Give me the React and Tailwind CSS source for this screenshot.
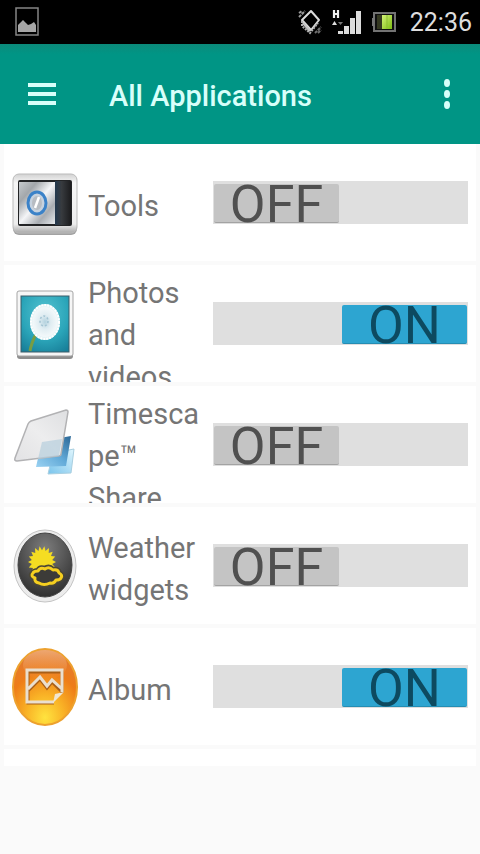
import { useState } from 'react'

function PictureIcon() {
  return (
    <svg width="24" height="30" viewBox="0 0 24 30" aria-hidden="true">
      <rect x="1" y="1" width="22" height="27" fill="none" stroke="#858585" strokeWidth="1.5" />
      <path d="M3 25V18l2-2 3-3 3 3 2 2 3-1 3-2 2 3v7z" fill="#a6a6a6" />
    </svg>
  )
}

function VibrateIcon() {
  return (
    <svg width="24" height="26" viewBox="0 0 24 26" fill="none" aria-hidden="true">
      <path d="M13 2l8 9-8 10-9-10z" stroke="#dcdcdc" strokeWidth="2" strokeLinejoin="round" />
      <path d="M4 12v5l8 7 8-10" stroke="#b0b0b0" strokeWidth="2" strokeDasharray="2 1" />
      <path d="M5 14l7 8" stroke="#c4c4c4" strokeWidth="2.5" />
      <path d="M1 8l6-6M1 4l3-2" stroke="#9a9a9a" strokeWidth="2" strokeDasharray="3 1" />
      <path d="M17 24l6-6M20 24l3-3" stroke="#707070" strokeWidth="2" strokeDasharray="3 1" />
    </svg>
  )
}

function SignalIcon() {
  return (
    <svg width="30" height="26" viewBox="0 0 30 26" fill="#dcdcdc" aria-hidden="true">
      <path d="M2 1v8M6 1v8M2 5h4" stroke="#f0f0f0" strokeWidth="2.200" />
      <path d="M0 16l2.500-4 2.500 4z" />
      <path d="M6 13h5l-2.500 3z" fill="#777777" />
      <rect x="6" y="22" width="5" height="3" />
      <rect x="12" y="17" width="5" height="8" />
      <rect x="18" y="9" width="5" height="16" />
      <rect x="24" y="2" width="5" height="23" />
    </svg>
  )
}

function BatteryIcon() {
  return (
    <svg width="24" height="22" viewBox="0 0 24 22" aria-hidden="true">
      <defs>
        <linearGradient id="charge" x1="0" y1="0" x2="1" y2="1">
          <stop offset="0" stopColor="#d3f277" />
          <stop offset="1" stopColor="#7dbd13" />
        </linearGradient>
      </defs>
      <rect x="2" y="2" width="21" height="18" fill="#101010" stroke="#737373" strokeWidth="2" />
      <rect x="0" y="7" width="2" height="8" fill="#777777" />
      <rect x="5" y="4" width="5" height="14" fill="#343821" />
      <rect x="10" y="4" width="10" height="14" fill="url(#charge)" />
      <path d="M15 4v14" stroke="#8dbd33" strokeWidth="1" />
    </svg>
  )
}

function ToolsIcon() {
  return (
    <svg width="66" height="80" viewBox="0 0 66 80" aria-hidden="true">
      <defs>
        <linearGradient id="toolsFrame" x1="0" y1="0" x2="0" y2="1">
          <stop offset="0" stopColor="#d2d2d2" />
          <stop offset=".15" stopColor="#f6f6f6" />
          <stop offset=".85" stopColor="#ededed" />
          <stop offset="1" stopColor="#a8a8a8" />
        </linearGradient>
        <linearGradient id="toolsSteel" x1="0" y1="0" x2="1" y2="1">
          <stop offset="0" stopColor="#c6cacd" />
          <stop offset=".25" stopColor="#a3a7ab" />
          <stop offset=".5" stopColor="#f4f5f7" />
          <stop offset=".75" stopColor="#a9adb2" />
          <stop offset="1" stopColor="#e6e9ec" />
        </linearGradient>
        <linearGradient id="toolsDark" x1="0" y1="0" x2="1" y2="0">
          <stop offset="0" stopColor="#22384e" />
          <stop offset=".4" stopColor="#383b3f" />
          <stop offset="1" stopColor="#1c1c1e" />
        </linearGradient>
      </defs>
      <rect x="1" y="12" width="64" height="60" rx="6" fill="#a2a2a2" />
      <rect x="1" y="11" width="64" height="59" rx="6" fill="url(#toolsFrame)" stroke="#bbbbbb" />
      <rect x="6" y="17" width="54" height="46" rx="2" fill="#232426" />
      <rect x="7" y="19" width="36" height="42" fill="url(#toolsSteel)" />
      <rect x="43" y="18" width="16" height="44" fill="url(#toolsDark)" />
      <ellipse cx="25" cy="40" rx="9" ry="11" fill="#c6d2df" stroke="#3b82c8" strokeWidth="3" />
      <ellipse cx="25" cy="40" rx="5" ry="7" fill="#b7bcc2" />
      <path d="M23 45l4-11" stroke="#ffffff" strokeWidth="2.500" />
    </svg>
  )
}

function PhotosIcon() {
  return (
    <svg width="66" height="80" viewBox="0 0 66 80" aria-hidden="true">
      <defs>
        <radialGradient id="photoSky" cx=".5" cy=".3" r=".8">
          <stop offset="0" stopColor="#54c3d1" />
          <stop offset=".6" stopColor="#2ba5b9" />
          <stop offset="1" stopColor="#187f99" />
        </radialGradient>
        <radialGradient id="dandelion">
          <stop offset="0" stopColor="#b5d3df" />
          <stop offset=".4" stopColor="#e0edf2" />
          <stop offset=".8" stopColor="#f2f8fa" />
          <stop offset="1" stopColor="#d3edf1" />
        </radialGradient>
      </defs>
      <rect x="5" y="9" width="56" height="66" rx="3" fill="#8d8d8d" />
      <rect x="5" y="7" width="56" height="65" rx="2" fill="#f6f6f6" stroke="#a5a5a5" />
      <rect x="9" y="12" width="48" height="56" fill="url(#photoSky)" stroke="#3b5d68" />
      <path d="M24 50c-3 6-5 11-6 17" fill="none" stroke="#789d43" strokeWidth="3" />
      <ellipse cx="33" cy="38" rx="15" ry="18" fill="url(#dandelion)" />
      <ellipse cx="33" cy="38" rx="14" ry="17" fill="none" stroke="#ffffff" strokeWidth="2" strokeDasharray="2 1" />
      <ellipse cx="32" cy="37" rx="4" ry="5" fill="none" stroke="#a3c4d3" strokeWidth="1.500" strokeDasharray="2 2" />
    </svg>
  )
}

function TimescapeIcon() {
  return (
    <svg width="66" height="80" viewBox="0 0 66 80" aria-hidden="true">
      <defs>
        <linearGradient id="pane" x1="1" y1="0" x2="0" y2="1">
          <stop offset="0" stopColor="#dedfe1" />
          <stop offset=".5" stopColor="#ededee" />
          <stop offset="1" stopColor="#e2e2e4" />
        </linearGradient>
        <linearGradient id="paneBlue" x1="1" y1="0" x2="0" y2="1">
          <stop offset="0" stopColor="#2b6796" />
          <stop offset=".5" stopColor="#62aad8" />
          <stop offset="1" stopColor="#9bd2f2" />
        </linearGradient>
        <linearGradient id="paneLight" x1="1" y1="0" x2="0" y2="1">
          <stop offset="0" stopColor="#dff5fd" />
          <stop offset="1" stopColor="#79c4ec" />
        </linearGradient>
      </defs>
      <path d="M41 48l21-4-3 24-23 1z" fill="url(#paneLight)" stroke="#a9cfe0" />
      <path d="M30 36l29-5-5 30-30 1z" fill="url(#paneBlue)" />
      <path d="M16 19q1-2 3-3l35-11q2 0 2 2l-7 42q0 2-3 2L5 56q-3 0-2-3z" fill="url(#pane)" stroke="#b2b2b4" strokeWidth="1.500" />
      <path d="M30 37l20-3-3 17-21 3z" fill="#b6cedd" opacity=".7" />
    </svg>
  )
}

// alternating outer / inner points of the sun's rays
const SUN_POINTS = Array.from({ length: 36 }, (_, i) => {
  const a = (i * Math.PI) / 18
  const k = i % 2 ? 0.74 : 1
  return `${(30 + 14 * k * Math.cos(a)).toFixed(1)},${(36 + 16 * k * Math.sin(a)).toFixed(1)}`
}).join(' ')

function WeatherIcon() {
  return (
    <svg width="66" height="80" viewBox="0 0 66 80" aria-hidden="true">
      <defs>
        <radialGradient id="weatherDial" cx=".5" cy=".25" r=".75">
          <stop offset="0" stopColor="#7d7d7d" />
          <stop offset=".5" stopColor="#575757" />
          <stop offset="1" stopColor="#303030" />
        </radialGradient>
      </defs>
      <ellipse cx="33" cy="40" rx="31" ry="36" fill="#ececec" stroke="#c4c4c4" />
      <ellipse cx="33" cy="39" rx="27" ry="32" fill="url(#weatherDial)" stroke="#454545" />
      <polygon points={SUN_POINTS} fill="#f5dd22" />
      <path
        d="M27 57q-5-1-4-5-5-2-2-5 1-2 5-2 2-4 7-2 4-3 8 1 5-1 6 3 4 2 2 5-1 2-5 2-2 4-6 3-6 3-11 0z"
        fill="#43413c" stroke="#4a4636" strokeWidth="6" strokeLinejoin="round"
      />
      <path
        d="M27 57q-5-1-4-5-5-2-2-5 1-2 5-2 2-4 7-2 4-3 8 1 5-1 6 3 4 2 2 5-1 2-5 2-2 4-6 3-6 3-11 0z"
        fill="#3c3b38" stroke="#f5cf20" strokeWidth="3" strokeLinejoin="round"
      />
    </svg>
  )
}

function AlbumIcon() {
  return (
    <svg width="66" height="80" viewBox="0 0 66 80" aria-hidden="true">
      <defs>
        <radialGradient id="albumOrb" cx=".5" cy=".9" r=".85">
          <stop offset="0" stopColor="#ffe33f" />
          <stop offset=".35" stopColor="#f9b226" />
          <stop offset=".7" stopColor="#ee7d18" />
          <stop offset="1" stopColor="#e37a30" />
        </radialGradient>
        <linearGradient id="albumGloss" x1="0" y1="0" x2="0" y2="1">
          <stop offset="0" stopColor="#f2ba8c" stopOpacity=".7" />
          <stop offset="1" stopColor="#f2a35c" stopOpacity="0" />
        </linearGradient>
      </defs>
      <ellipse cx="33" cy="40" rx="32" ry="38" fill="url(#albumOrb)" stroke="#eda12e" strokeWidth="2" />
      <ellipse cx="33" cy="18" rx="22" ry="15" fill="url(#albumGloss)" />
      <g fill="none" strokeLinejoin="miter">
        <path d="M50 46V25H16v31h26M16 44l12-12 7 9 5-6 10 10" stroke="#a95f17" strokeWidth="3" />
        <path d="M50 45V23H15v32h27M16 42l12-12 7 9 5-6 10 9" stroke="#eadfce" strokeWidth="3" />
      </g>
      <path d="M41 56l2-9 9-2z" fill="#f1e6d1" />
    </svg>
  )
}

const APPS = [
  { id: 'tools', name: 'Tools', Icon: ToolsIcon, on: false },
  { id: 'photos', name: 'Photos and videos', Icon: PhotosIcon, on: true },
  { id: 'timescape', name: 'Timescape™ Share', Icon: TimescapeIcon, on: false },
  { id: 'weather', name: 'Weather widgets', Icon: WeatherIcon, on: false },
  { id: 'album', name: 'Album', Icon: AlbumIcon, on: true },
]

function Toggle({ id, checked, onChange }) {
  return (
    <label
      htmlFor={id}
      className={`relative flex h-[43px] min-w-0 flex-1 cursor-pointer bg-[#dfdfdf] px-px pt-[3px] pb-px ${checked ? 'justify-end' : 'justify-start'}`}
    >
      <input
        id={id}
        type="checkbox"
        aria-labelledby={`${id}-name`}
        checked={checked}
        onChange={onChange}
        className="sr-only"
      />
      <span
        className={`flex w-[125px] items-center justify-center rounded-xs border-b pt-1 text-[52px] leading-none ${checked ? 'border-[#258db3] bg-[#2da5d1] text-[#0d4a60]' : 'border-[#a3a3a3] bg-[#c4c4c4] text-[#505050]'}`}
      >
        {checked ? 'ON' : 'OFF'}
      </span>
    </label>
  )
}

function AppRow({ app, checked, onToggle }) {
  const { id, name, Icon } = app
  return (
    <li className="flex h-[117px] items-center overflow-hidden bg-white px-2">
      <span className="w-[66px] shrink-0">
        <Icon />
      </span>
      <div className="ml-[10px] flex h-full w-[112px] shrink-0 items-center pt-[7px]">
        <span
          id={`${id}-name`}
          className="max-h-full w-full overflow-hidden text-[29px] leading-[42px] wrap-anywhere text-[#757575]"
        >
          {name}
        </span>
      </div>
      <div className="ml-[13px] flex flex-1">
        <Toggle id={id} checked={checked} onChange={onToggle} />
      </div>
    </li>
  )
}

export default function App() {
  const [enabled, setEnabled] = useState(() => Object.fromEntries(APPS.map((a) => [a.id, a.on])))

  function toggle(id) {
    setEnabled((prev) => ({ ...prev, [id]: !prev[id] }))
  }

  return (
    <div className="min-h-screen bg-[#fafafa] font-['Roboto',sans-serif]">
      <div className="flex h-11 items-center justify-between bg-black pr-2 pl-[15px]">
        <PictureIcon />
        <div className="flex items-center gap-[10px]">
          <VibrateIcon />
          <SignalIcon />
          <BatteryIcon />
          <span className="ml-1 text-[25px] leading-none text-[#dedede]">22:36</span>
        </div>
      </div>

      <header className="flex h-[100px] items-center bg-[#009585] bg-linear-to-b from-[#0b8a7a] to-[#009585] to-10% pr-[21px] pl-7 text-[#d8fffa]">
        <button type="button" aria-label="Open menu" className="cursor-pointer">
          <svg width="28" height="24" viewBox="0 0 28 24" fill="currentColor">
            <rect y="1" width="28" height="4" />
            <rect y="10" width="28" height="4" />
            <rect y="19" width="28" height="4" />
          </svg>
        </button>
        <h1 className="ml-[53px] flex-1 pt-1 text-[29px] leading-8 font-medium">All Applications</h1>
        <button type="button" aria-label="More options" className="cursor-pointer">
          <svg width="24" height="30" viewBox="0 0 24 30" fill="currentColor">
            <ellipse cx="12" cy="4" rx="3" ry="4" />
            <ellipse cx="12" cy="15" rx="3" ry="4" />
            <ellipse cx="12" cy="26" rx="3" ry="4" />
          </svg>
        </button>
      </header>

      <main>
        <ul className="flex flex-col gap-1 px-1">
          {APPS.map((app) => (
            <AppRow key={app.id} app={app} checked={enabled[app.id]} onToggle={() => toggle(app.id)} />
          ))}
          <li className="h-[17px] bg-white" aria-hidden="true" />
        </ul>
      </main>
    </div>
  )
}
